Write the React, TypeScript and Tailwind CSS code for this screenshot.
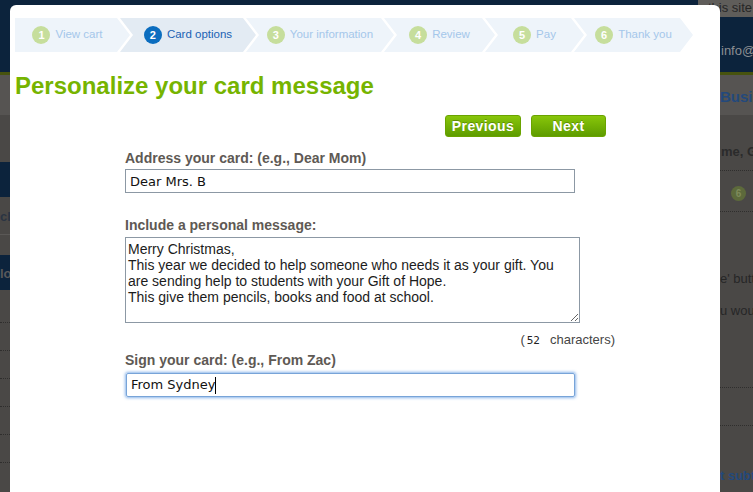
import React from 'react';

const steps = [
  { n: 1, label: 'View cart', box: 'w-[115px] pr-[10px]', clip: '[clip-path:polygon(0_0,calc(100%_-_13px)_0,100%_50%,calc(100%_-_13px)_100%,0_100%)]' },
  { n: 2, label: 'Card options', box: 'w-[136px] -ml-[10px]', active: true },
  { n: 3, label: 'Your information', box: 'w-[148px] -ml-[10px]' },
  { n: 4, label: 'Review', box: 'w-[111px] -ml-[10px]' },
  { n: 5, label: 'Pay', box: 'w-[99px] -ml-[10px]' },
  { n: 6, label: 'Thank you', box: 'w-[119px] -ml-[10px]' },
];

const chevron =
  '[clip-path:polygon(0_0,calc(100%_-_13px)_0,100%_50%,calc(100%_-_13px)_100%,0_100%,13px_50%)]';

const Stepper: React.FC = () => (
  <div className="flex h-[34px]">
    {steps.map((s) => (
      <div
        key={s.n}
        className={`${s.box} ${s.clip ?? chevron} h-full flex items-center justify-center gap-[5px] ${
          s.active ? 'bg-[#e3ebf3]' : 'bg-[#eef4fa]'
        }`}
      >
        <span
          className={`w-[18px] h-[18px] rounded-full flex items-center justify-center text-[11px] font-bold text-white ${
            s.active ? 'bg-[#0b6dbf]' : 'bg-[#c6de9c]'
          }`}
        >
          {s.n}
        </span>
        <span className={`text-[11.5px] whitespace-nowrap ${s.active ? 'text-[#1a62b3]' : 'text-[#a5c7ea]'}`}>
          {s.label}
        </span>
      </div>
    ))}
  </div>
);

const Dots: React.FC<{ className?: string }> = ({ className }) => (
  <div className={`border-t border-dotted border-[#2f2e2d] ${className ?? ''}`} />
);

export default function App() {
  return (
    <div className="relative w-[753px] h-[492px] overflow-hidden bg-[#4a4846] font-['Liberation_Sans',Arial,sans-serif]">
      {/* page behind the dialog, dimmed */}
      <div className="flex flex-col h-full">
        <header className="h-[72px] bg-[#0c233c] flex justify-end">
          <div className="w-[55px] flex flex-col">
            <div className="h-[17px] bg-[#5f5d5a] text-[13px] leading-[15px] text-[#262626] pl-[10px] whitespace-nowrap overflow-hidden">
              this site
            </div>
            <div className="mt-[24px] pl-[23px] text-[13px] text-[#8d8f92] whitespace-nowrap overflow-hidden">info@</div>
          </div>
        </header>
        <div className="h-[3px] bg-[#47530f]" />
        <div className="h-[40px] bg-[#565452] flex justify-end items-center">
          <div className="w-[33px] text-[15px] font-bold text-[#23497c] whitespace-nowrap overflow-hidden pt-[5px]">
            Busin
          </div>
        </div>
        <div className="flex-1 flex justify-between">
          <div className="w-[10px] overflow-hidden">
            <div className="mt-[47px] h-[35px] bg-[#0c233c]" />
            <div className="h-[38px] border-b border-[#5a5856] text-[13px] font-bold text-[#2a3442] pt-[10px] whitespace-nowrap overflow-hidden">
              ch
            </div>
            <div className="mt-[20px] h-[35px] bg-[#0c233c] text-[13px] font-bold text-[#58595b] pt-[9px] whitespace-nowrap overflow-hidden">
              lo
            </div>
            <Dots className="mt-[32px]" />
            <Dots className="mt-[27px]" />
            <Dots className="mt-[27px]" />
            <Dots className="mt-[27px]" />
            <Dots className="mt-[27px]" />
            <Dots className="mt-[27px]" />
          </div>
          <div className="w-[33px] overflow-hidden whitespace-nowrap text-[13px]">
            <div className="mt-[27px] font-bold text-[#2b2b2b] pl-[1px]">me, Gi</div>
            <Dots className="mt-[8px]" />
            <div className="mt-[15px] ml-[11px] w-[15px] h-[15px] rounded-full bg-[#5d6a3b] text-[10px] font-bold text-[#7e8a5c] flex items-center justify-center">
              6
            </div>
            <Dots className="mt-[10px]" />
            <div className="mt-[57px] text-[#262626]">e' butt</div>
            <div className="mt-[13px] text-[#262626]">u woul</div>
            <Dots className="mt-[66px]" />
            <Dots className="mt-[37px]" />
            <div className="mt-[40px] font-bold text-[#23497c]">t subt</div>
          </div>
        </div>
      </div>

      {/* dialog */}
      <div className="absolute left-[10px] top-[5px] w-[710px] h-[500px] bg-white rounded-t-[6px] z-10 px-[5px] pt-[13px]">
        <Stepper />

        <h1 className="mt-[20px] text-[24px] leading-[28px] font-bold text-[#76b400]">
          Personalize your card message
        </h1>

        <div className="mt-[15px] flex justify-end gap-[10px] pr-[109px]">
          <button className="w-[76px] h-[22px] rounded-[3px] border border-[#6aa300] bg-gradient-to-b from-[#88c60a] to-[#5e9c00] text-[14px] font-bold tracking-[0.4px] text-white [text-shadow:0_-1px_0_rgba(0,0,0,0.25)]">
            Previous
          </button>
          <button className="w-[75px] h-[22px] rounded-[3px] border border-[#6aa300] bg-gradient-to-b from-[#88c60a] to-[#5e9c00] text-[14px] font-bold tracking-[0.4px] text-white [text-shadow:0_-1px_0_rgba(0,0,0,0.25)]">
            Next
          </button>
        </div>

        <form className="ml-[110px] w-[490px] mt-[13px] flex flex-col">
          <label className="text-[14px] leading-[16px] font-bold text-[#5e5954]">
            Address your card: (e.g., Dear Mom)
          </label>
          <input
            defaultValue="Dear Mrs. B"
            className="mt-[3px] w-[450px] h-[24px] border border-[#8c98a4] px-[4px] text-[13px] text-[#111] font-['DejaVu_Sans',sans-serif] outline-none"
          />

          <label className="mt-[24px] text-[14px] leading-[16px] font-bold text-[#5e5954]">
            Include a personal message:
          </label>
          <textarea
            defaultValue={
              'Merry Christmas,\nThis year we decided to help someone who needs it as your gift. You are sending help to students with your Gift of Hope.\nThis give them pencils, books and food at school.'
            }
            className="mt-[4px] w-[455px] h-[86px] border border-[#8c98a4] pl-[2px] pr-[8px] pt-[3px] text-[14px] leading-[16px] text-[#1c1c1c] outline-none"
          />

          <div className="mt-[9px] flex justify-end items-baseline text-[13px] leading-[16px] text-[#454545]">
            <span>(</span>
            <span className="ml-[2px] font-['DejaVu_Sans_Mono',monospace] text-[11px] text-[#222]">52</span>
            <span className="ml-[10px]">characters)</span>
          </div>

          <label className="mt-[3px] text-[14px] leading-[16px] font-bold text-[#5e5954]">
            Sign your card: (e.g., From Zac)
          </label>
          <div className="mt-[5px] ml-[1px] w-[449px] h-[24px] border border-[#78a4d8] shadow-[0_0_3px_1px_rgba(90,150,225,0.7)] rounded-[2px] px-[4px] flex items-center text-[13px] text-[#111] font-['DejaVu_Sans',sans-serif]">
            From Sydney
            <span className="inline-block w-[1px] h-[17px] bg-black" />
          </div>
        </form>
      </div>
    </div>
  );
}
